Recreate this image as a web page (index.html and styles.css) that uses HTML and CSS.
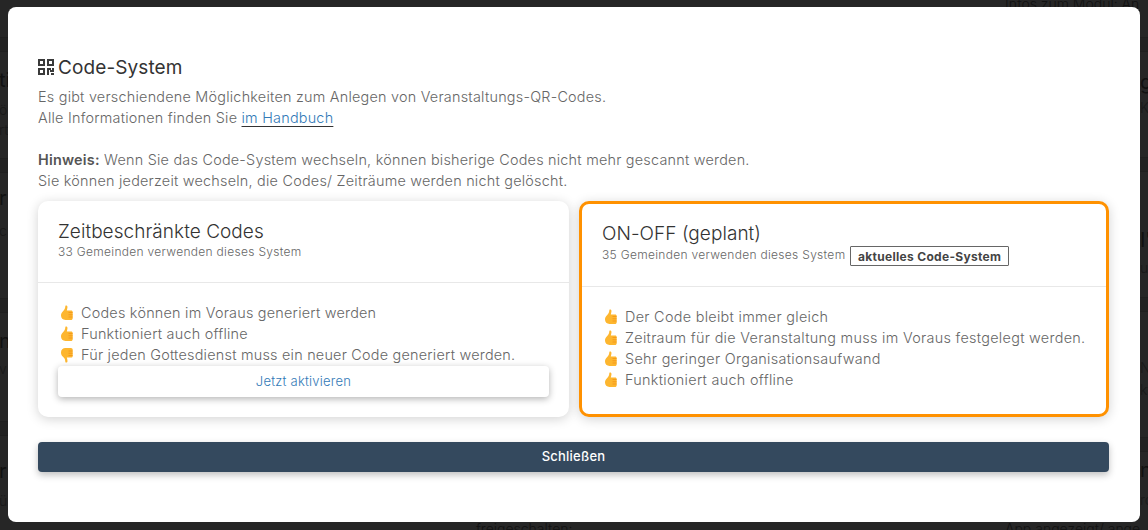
FILE: index.html
```html
<!doctype html>
<html lang="de">
<head>
<meta charset="utf-8">
<title>Code-System</title>
<link rel="stylesheet" href="styles.css">
</head>
<body>
<svg width="0" height="0" class="defs">
	<symbol id="up" viewBox="0 0 14 16">
		<path fill="#fdb62f" d="M5.600.6c1-.4 1.900.3 1.900 1.500 0 1.200-.5 2.200-.7 3.300h4.300c1 0 1.600.7 1.600 1.600v6.200c0 1-.7 1.800-1.800 1.800H5.500C2.800 15 1 13.300 1 10.600c0-1.800.7-3.200 2-4.400C4.300 5 5 3.800 5.200 2.300c.1-.7.100-1.400.4-1.700z"/>
		<path fill="#f59a1c" d="M8.500 7h4v1h-4zm0 2.300h4v1h-4zm0 2.300h4v1h-4z"/>
	</symbol>
	<symbol id="down" viewBox="0 0 14 16">
		<path fill="#fdb62f" d="M5.600 15.400c1 .4 1.900-.3 1.900-1.500 0-1.200-.5-2.200-.7-3.300h4.300c1 0 1.600-.7 1.600-1.600V2.800c0-1-.7-1.800-1.800-1.800H5.500C2.800 1 1 2.700 1 5.400c0 1.800.7 3.200 2 4.400 1.300 1.200 2 2.400 2.200 3.900.1.700.1 1.400.4 1.700z"/>
		<path fill="#f59a1c" d="M8.500 8h4v1h-4zm0-2.300h4v1h-4zm0-2.300h4v1h-4z"/>
	</symbol>
</svg>

<!-- page behind the dialog, only the edges show -->
<div class="page">
	<div class="strip left">
		<div class="band"></div>
		<div class="hd m16">ti</div>
		<div class="tx m8">ö</div>
		<div class="tx">rt</div>
		<div class="band m18"></div>
		<div class="hd m13">r</div>
		<div class="tx m11">c</div>
		<div class="band m57"></div>
		<div class="hd m16">n</div>
		<div class="tx m6">v</div>
		<div class="band m42"></div>
		<div class="hd m23">r</div>
		<div class="tx m8">ü</div>
	</div>
	<div class="middle">
		<div class="top-row">Infos zum Modul: <u>Anleitung</u></div>
		<div class="bottom-row">
			<span class="cell">freigeschalten:</span>
			<span>App angezeigt/ angezeigt</span>
		</div>
	</div>
	<div class="strip right">
		<div class="band"></div>
		<div class="hd m18">g</div>
		<div class="tx m4">Ku</div>
		<div class="band m39"></div>
		<div class="hd m56">I'</div>
		<div class="tx m6">u</div>
		<div class="band m19"></div>
		<div class="tx m46">Nu</div>
		<div class="tx m2">kt</div>
		<div class="band m37"></div>
		<div class="hd m6">ng</div>
		<div class="tx m8">ro</div>
	</div>
</div>

<div class="modal">
	<h2 class="title">
		<svg class="qr" viewBox="0 0 16 16" width="16" height="16">
			<path fill="#3a3a3a" d="M0 0h7v7H0zm2 2v3h3V2zM9 0h7v7H9zm2 2v3h3V2zM0 9h7v7H0zm2 2v3h3v-3zM9 9h4v2h-2v5H9zm5 0h2v4h-4v-2h2zm-1 5h3v2h-3z"/>
		</svg>
		Code-System
	</h2>
	<p class="intro">Es gibt verschiendene Möglichkeiten zum Anlegen von Veranstaltungs-QR-Codes.<br>
	Alle Informationen finden Sie <a href="#">im Handbuch</a></p>
	<p class="intro note"><b>Hinweis:</b> Wenn Sie das Code-System wechseln, können bisherige Codes nicht mehr gescannt werden.<br>
	Sie können jederzeit wechseln, die Codes/ Zeiträume werden nicht gelöscht.</p>

	<div class="cards">
		<div class="card">
			<div class="card-head">
				<h3>Zeitbeschränkte Codes</h3>
				<small>33 Gemeinden verwenden dieses System</small>
			</div>
			<ul class="list">
				<li><svg class="ico"><use href="#up"/></svg>Codes können im Voraus generiert werden</li>
				<li><svg class="ico"><use href="#up"/></svg>Funktioniert auch offline</li>
				<li><svg class="ico"><use href="#down"/></svg>Für jeden Gottesdienst muss ein neuer Code generiert werden.</li>
			</ul>
			<a href="#" class="btn-activate">Jetzt aktivieren</a>
		</div>
		<div class="card current">
			<div class="card-head">
				<h3>ON-OFF (geplant)</h3>
				<small>35 Gemeinden verwenden dieses System <span class="tag">aktuelles Code-System</span></small>
			</div>
			<ul class="list">
				<li><svg class="ico"><use href="#up"/></svg>Der Code bleibt immer gleich</li>
				<li><svg class="ico"><use href="#up"/></svg>Zeitraum für die Veranstaltung muss im Voraus festgelegt werden.</li>
				<li><svg class="ico"><use href="#up"/></svg>Sehr geringer Organisationsaufwand</li>
				<li><svg class="ico"><use href="#up"/></svg>Funktioniert auch offline</li>
			</ul>
		</div>
	</div>

	<a href="#" class="btn-close">Schließen</a>
</div>
</body>
</html>
```
FILE: styles.css
```css
html,body,h2,h3,p,ul{margin:0;padding:0}
ul{list-style:none}
html,body{width:100%;height:100%;overflow:hidden}
body{background:#262626;color:#666;font:14.4px/21px "Inter","Noto Sans",sans-serif;font-weight:300;letter-spacing:.23px}
a{text-decoration:none}
.defs{position:absolute}

/* page behind the dialog */
.page{display:flex;height:100%;color:#111;font-size:14px;letter-spacing:0}
.strip{flex:none;width:8px;overflow:hidden;white-space:nowrap}
.strip.left{text-indent:-1px}
.band{height:15px;margin-top:37px;background:#222;border-top:1px solid #1f1f1f;border-bottom:1px solid #1f1f1f;box-sizing:border-box}
.hd{font-size:20px;line-height:24px;font-weight:400}
.tx{line-height:20px;color:#191919}
.middle{flex:1;display:flex;flex-direction:column;justify-content:space-between;overflow:hidden;white-space:nowrap}
.top-row{height:7px;padding-left:997px;line-height:7px}
.bottom-row{display:flex;height:8px;padding-left:468px;line-height:14px}
.cell{flex:none;width:529px}
.m2{margin-top:2px}
.m4{margin-top:4px}
.m6{margin-top:6px}
.m8{margin-top:8px}
.m11{margin-top:11px}
.m13{margin-top:13px}
.m16{margin-top:16px}
.m18{margin-top:18px}
.band.m18{margin-top:18px}
.band.m19{margin-top:19px}
.band.m37{margin-top:37px}
.band.m39{margin-top:39px}
.band.m42{margin-top:42px}
.band.m57{margin-top:57px}
.m23{margin-top:23px}
.m46{margin-top:46px}
.m56{margin-top:56px}

.modal{position:fixed;left:8px;top:7px;width:1132px;height:515px;box-sizing:border-box;padding:48px 31px 0 30px;background:#fff;border-radius:8px}
.title{display:flex;align-items:center;gap:4px;height:24px;color:#333;font-size:19px;font-weight:400;letter-spacing:.1px}
.qr{flex:none}
.intro{margin-top:7px}
.intro a{color:#337ab7;text-decoration:underline;text-decoration-color:#333;text-underline-offset:3px}
.intro b{font-weight:600;color:#555}
.note{margin-top:21px}

.cards{display:flex;gap:10px;margin-top:10px}
.card{flex:0 0 531px;height:216px;box-sizing:border-box;background:#fff;border-radius:10px;box-shadow:0 2px 12px rgba(0,0,0,.18);position:relative}
.card-head{height:82px;box-sizing:border-box;padding:19px 20px 0;border-bottom:1px solid #e8e8e8}
.card-head h3{font-size:19px;line-height:23px;font-weight:300;color:#333;letter-spacing:.05px}
.card-head small{display:block;font-size:12px;line-height:18px;color:#666;letter-spacing:.3px}
.list{padding-top:19px}
.list li{display:flex;align-items:center;padding-left:21px;color:#666;white-space:nowrap}
.ico{width:16px;height:16px;margin-right:6px;flex:none}
.btn-activate{position:absolute;left:20px;right:20px;top:165px;height:31px;line-height:31px;text-align:center;background:#fff;border-radius:4px;color:#337ab7;font-size:13px;box-shadow:0 2px 7px rgba(0,0,0,.3)}

.current{flex-basis:530px;border:3px solid #ff9100}
.current .card-head{padding:18px 20px 0;height:83px}
.current .card-head small{line-height:20px}
.tag{display:inline-block;height:20px;line-height:19px;box-sizing:border-box;padding:0 7px;margin-left:1px;border:1px solid #666;border-radius:1px;color:#444;font-weight:700;vertical-align:-2px}
.current .list li{letter-spacing:.3px}

.btn-close{display:block;height:30px;margin-top:25px;line-height:29px;text-align:center;background:#34495e;border-radius:4px;color:#fff;font-size:13px;font-weight:500;box-shadow:0 3px 7px rgba(0,0,0,.25)}
```
